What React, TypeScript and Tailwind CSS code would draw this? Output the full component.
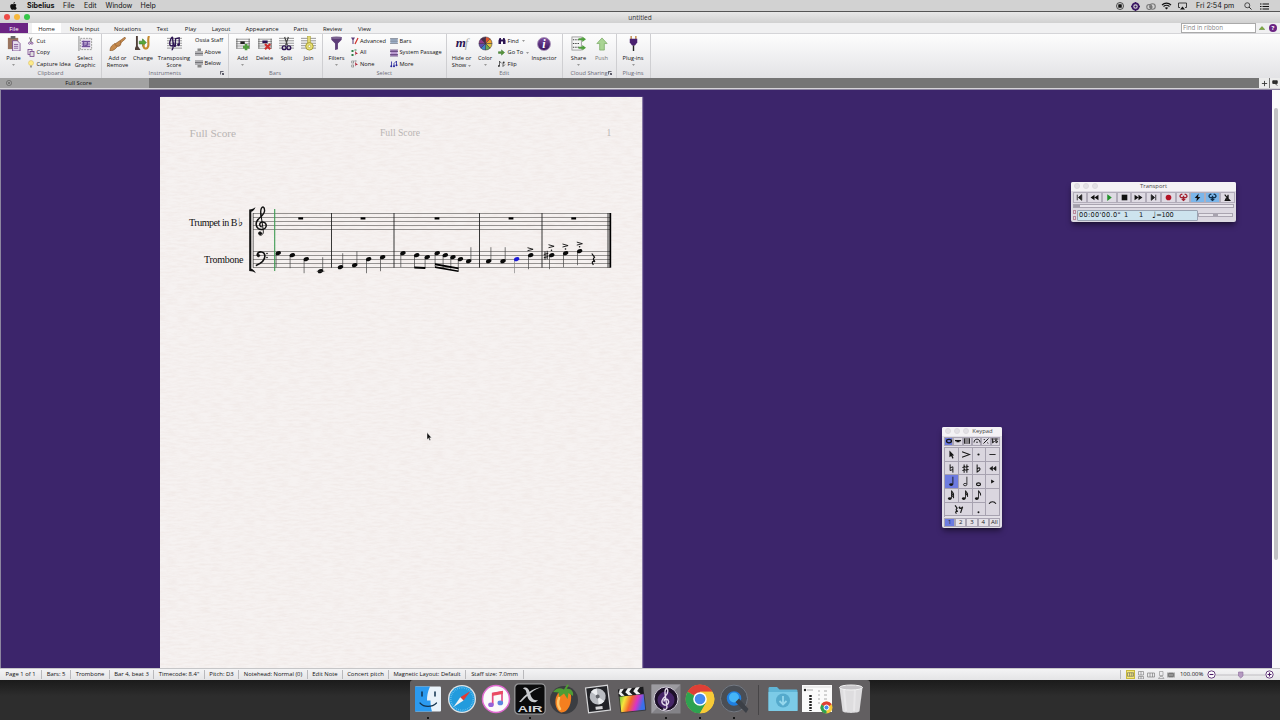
import type { ReactNode } from "react";

const UI = "font-['Open_Sans','Noto_Sans',sans-serif]";

/* ---------- small helpers ---------- */

function Icon({ s = 16, h, box = "0 0 16 16", children }: { s?: number; h?: number; box?: string; children: ReactNode }) {
  return (
    <svg width={s} height={h ?? s} viewBox={box} fill="none" className="block shrink-0">
      {children}
    </svg>
  );
}

function StaffLines({ top = 2.5, gap = 2.6, n = 5 }: { top?: number; gap?: number; n?: number }) {
  return (
    <>
      {Array.from({ length: n }, (_, i) => (
        <path key={i} d={`M0 ${top + i * gap}H16`} stroke="#777" strokeWidth="0.8" />
      ))}
    </>
  );
}

function Big({ w, icon, label, sub, drop, muted }: { w: string; icon: ReactNode; label: string; sub?: string; drop?: boolean; muted?: boolean }) {
  return (
    <div className={`flex shrink-0 flex-col items-center pt-[2.5px] ${w} ${muted ? "text-[#777]" : "text-[#111]"}`}>
      <div className="flex h-[15px] items-center">{icon}</div>
      <span className="mt-[4px] whitespace-nowrap leading-[6.5px]">{label}</span>
      {sub && <span className="whitespace-nowrap leading-[6.5px]">{sub}</span>}
      {drop && <Caret />}
    </div>
  );
}

function Caret() {
  return (
    <svg width="3" height="2" viewBox="0 0 3 2" className="mt-[2px] inline-block shrink-0">
      <path d="M0 0H3L1.5 2Z" fill="#999" />
    </svg>
  );
}

function Small({ icon, label, drop }: { icon?: ReactNode; label: string; drop?: boolean }) {
  return (
    <div className="flex h-[11.5px] items-center whitespace-nowrap">
      {icon && <div className="flex w-[9.5px] shrink-0 items-center">{icon}</div>}
      <span>{label}</span>
      {drop && <span className="ml-[3px] mb-[2px] flex"><Caret /></span>}
    </div>
  );
}

function Group({ w, title, launcher, children }: { w: string; title: string; launcher?: boolean; children: ReactNode }) {
  return (
    <div className={`flex h-full shrink-0 flex-col border-r border-[#cfcfd2] ${w}`}>
      <div className="flex h-[35.5px] shrink-0">{children}</div>
      <div className="relative h-[8px] whitespace-nowrap text-center leading-[8px] text-[#6b6b78]">
        {title}
        {launcher && (
          <svg width="4" height="4" viewBox="0 0 4 4" className="absolute right-[4px] top-[2px]">
            <path d="M.4 3.5V.4H3.5M1.8 1.8L3.5 3.5M3.6 2V3.6H2" stroke="#334" strokeWidth=".8" fill="none" />
          </svg>
        )}
      </div>
    </div>
  );
}

/* ---------- menu bar ---------- */

function MenuBar() {
  return (
    <div className="flex h-3 items-center justify-between border-b border-[#555] bg-[#d2d2d2] pl-[10px] pr-[11px] font-['Inter',sans-serif] text-[7px] text-[#111]">
      <div className="flex items-center pt-[1px]">
        <svg width="7" height="8" viewBox="0 0 14 17" className="mr-[10px]">
          <path d="M10 0C8 0 6.600 1.800 6.900 3.800 8.700 3.800 10.200 2 10 0ZM7 4.800C6 4.800 5.300 4.200 4 4.200 2 4.200 0 6 0 9.200 0 12.800 2.200 16.500 4.200 16.500 5.300 16.500 5.800 15.800 7.200 15.800 8.600 15.800 9 16.500 10.200 16.500 11.900 16.500 13.300 14.200 13.800 12.500 11.200 11.300 11.200 7.800 13.400 6.500 12.600 5.100 11.300 4.300 10 4.300 8.700 4.300 7.900 4.800 7 4.800Z" fill="#111" />
        </svg>
        <span className="w-[36px] text-[7.100px] font-bold">Sibelius</span>
        <span className="w-[21px]">File</span>
        <span className="w-[21.500px]">Edit</span>
        <span className="w-[35px]">Window</span>
        <span>Help</span>
      </div>
      <div className="flex items-center pt-[1px]">
        <Icon s={8}><circle cx="8" cy="8" r="7" stroke="#222" strokeWidth="1.500" /><rect x="4.500" y="4.500" width="7" height="7" rx="1" fill="#111" /></Icon>
        <span className="w-[7px]" />
        <Icon s={9}><circle cx="8" cy="8" r="5.500" stroke="#3b1764" strokeWidth="3" /><circle cx="8" cy="8" r="2" fill="#3b1764" /><path d="M8 0V3M8 13V16M0 8H3M13 8H16" stroke="#3b1764" strokeWidth="2.500" /></Icon>
        <span className="w-[6px]" />
        <Icon s={10} h={7} box="0 0 20 14"><circle cx="6.500" cy="8" r="5" stroke="#777" strokeWidth="2.200" /><circle cx="13" cy="7" r="5.500" stroke="#777" strokeWidth="2.200" /><circle cx="10" cy="8" r="3" fill="#777" /></Icon>
        <span className="w-[5px]" />
        <Icon s={11} h={8} box="0 0 20 16"><path d="M1 6C6 1 14 1 19 6M4 9C7.500 6 12.500 6 16 9" stroke="#111" strokeWidth="2.200" /><path d="M6.500 11.500C8.500 10 11.500 10 13.500 11.500L10 15Z" fill="#111" /></Icon>
        <span className="w-[6px]" />
        <Icon s={9} h={8} box="0 0 18 16"><path d="M4 11H1V2H17V11H14" stroke="#222" strokeWidth="1.700" /><path d="M9 9L14 15H4Z" fill="#111" /></Icon>
        <span className="ml-[9px] w-[48px] text-[7.100px]">Fri 2:54 pm</span>
        <Icon s={8}><circle cx="6.500" cy="6.500" r="5" stroke="#333" strokeWidth="1.700" /><path d="M10 10L15 15" stroke="#333" strokeWidth="2" /></Icon>
        <span className="w-[8px]" />
        <Icon s={9} h={7} box="0 0 18 14"><path d="M5 2H18M5 7H18M5 12H18" stroke="#111" strokeWidth="2" /><path d="M0 2H3M0 7H3M0 12H3" stroke="#111" strokeWidth="2" /></Icon>
      </div>
    </div>
  );
}

/* ---------- ribbon ---------- */

function TabRow() {
  return (
    <div className="flex h-[10.500px] items-stretch justify-between border-b border-[#d5d5d8] bg-[#f0f0f1] text-[5.900px] leading-[8px] text-[#111]">
      <div className="flex items-stretch *:pt-[1.500px]">
        <span className="w-[28px] bg-[#6b2483] text-center text-white">File</span>
        <span className="ml-[4px] w-[29px] bg-white text-center">Home</span>
        <span className="w-[47px] text-center">Note Input</span>
        <span className="w-[39px] text-center">Notations</span>
        <span className="w-[31px] text-center">Text</span>
        <span className="w-[25px] text-center">Play</span>
        <span className="w-[36px] text-center">Layout</span>
        <span className="w-[46px] text-center">Appearance</span>
        <span className="w-[31px] text-center">Parts</span>
        <span className="w-[33px] text-center">Review</span>
        <span className="w-[31px] text-center">View</span>
      </div>
      <div className="flex items-center pr-[3px]">
        <span className="mr-[3px] h-[9.500px] w-[75px] border border-[#aaa] bg-white pl-[1px] text-[6.200px] text-[#888]">Find in ribbon</span>
        <Icon s={6} h={4} box="0 0 12 8"><path d="M6 1L11.500 7H.5Z" fill="#7fae3a" stroke="#55792a" /></Icon>
        <span className="ml-[4px] flex h-[8px] w-[8px] items-center justify-center rounded-full bg-[#6b2483] text-[6px] font-bold text-white">?</span>
      </div>
    </div>
  );
}

const brace = "#4c4c52";
const plum = "#6d3a86";

function Ribbon() {
  return (
    <div className="flex h-[44.500px] bg-gradient-to-b from-[#fdfdfd] to-[#e3e3e6] text-[5.700px] text-[#111]">
      <Group w="w-[102px]" title="Clipboard">
        <Big w="w-[27px]" label="Paste" drop icon={<Icon s={15}><rect x="2" y="2" width="11" height="12" fill="#9a7560" /><rect x="5" y="0" width="5" height="3" fill="#666" /><path d="M7 5H12L15 8V16H7Z" fill="#e9e2f0" stroke={plum} strokeWidth=".8" /><path d="M8.500 9H13M8.500 11H13M8.500 13H13" stroke={plum} strokeWidth=".8" /></Icon>} />
        <div className="w-[43px] pt-[2px]">
          <Small label="Cut" icon={<Icon s={8}><path d="M5 1L9 10M10 1L6 10" stroke="#555" strokeWidth="1.500" /><circle cx="5" cy="12.500" r="2" stroke={plum} strokeWidth="1.500" /><circle cx="10" cy="12.500" r="2" stroke={plum} strokeWidth="1.500" /></Icon>} />
          <Small label="Copy" icon={<Icon s={8}><rect x="2" y="1" width="8" height="10" fill="#eee" stroke={plum} strokeWidth="1.500" /><rect x="6" y="5" width="8" height="10" fill="#ddd" stroke={plum} strokeWidth="1.500" /></Icon>} />
          <Small label="Capture Idea" icon={<Icon s={8}><circle cx="8" cy="6" r="5" fill="#fdeb8a" stroke="#d8b95a" /><rect x="6" y="11" width="4" height="4" fill="#999" /></Icon>} />
        </div>
        <Big w="w-[30px]" label="Select" sub="Graphic" icon={<Icon s={15}><rect x="2.500" y="2.500" width="12" height="12" fill="#eee" stroke="#999" strokeDasharray="2 1" /><rect x="4" y="4" width="9" height="9" fill="#d9c9e4" /><path d="M4 6H13M4 8.500H13M4 11H13M6 5V11L10 9.500V6" stroke="#70509a" strokeWidth="1.200" /><path d="M1 0V16" stroke="#888" /></Icon>} />
      </Group>

      <Group w="w-[126.500px]" title="Instruments" launcher>
        <Big w="w-[31px]" label="Add or" sub="Remove" icon={<Icon s={17} h={14} box="0 0 18 15"><path d="M17 0L13 3 7 7C4 8 1 10 1 15C4 15 7 13 9 10L14 5 17.500 2Z" fill="#c68a4c" stroke="#8b5a2f" strokeWidth=".7" /><path d="M6 6.500C8 13 14 9 12 4" stroke="#a9713c" strokeWidth="1.300" /></Icon>} />
        <Big w="w-[20px]" label="Change" icon={<Icon s={16} h={15} box="0 0 17 16"><path d="M2 0V12M.5 14L2 11 4 14Z" stroke="#51413a" strokeWidth="2" /><path d="M4.500 5.500H8V3L12 7 8 11V8.500H4.500Z" fill="#58a83b" stroke="#2f6d22" strokeWidth=".6" /><path d="M15 0C13 3 15 8 14 11S9 15 9 9" stroke="#c58a2e" strokeWidth="2.300" /></Icon>} />
        <Big w="w-[42px]" label="Transposing" sub="Score" icon={<Icon s={15}><StaffLines /><path d="M5 15C8 14 6 5 6 2S2 6 3 9 8 10 7 7" stroke="#2c1452" strokeWidth="1.500" /><path d="M9 10V3L13 2V9" stroke="#2c1452" strokeWidth="1.300" /><circle cx="8.300" cy="10.300" r="1.500" fill="#2c1452" /><circle cx="12.300" cy="9.300" r="1.500" fill="#2c1452" /></Icon>} />
        <div className="pt-[1.500px]">
          <Small label="Ossia Staff" />
          <Small label="Above" icon={<Icon s={8}><rect x="5" y="1" width="7" height="5" fill="#888" /><path d="M0 8H16M0 11H16M0 14H16" stroke={brace} strokeWidth="1.500" /></Icon>} />
          <Small label="Below" icon={<Icon s={8}><rect x="5" y="10" width="8" height="5" fill="#888" /><path d="M0 2H16M0 5H16M0 8H16" stroke={brace} strokeWidth="1.500" /></Icon>} />
        </div>
      </Group>

      <Group w="w-[94px]" title="Bars">
        <span className="w-[3px]" />
        <Big w="w-[22px]" label="Add" drop icon={<Icon s={14}><StaffLines /><path d="M1 2V13M15 2V13" stroke="#666" /><rect x="5" y="5" width="5" height="3" fill="#222" /><path d="M11.500 8V15M8 11.500H15" stroke="#4f9e3c" strokeWidth="3" /></Icon>} />
        <Big w="w-[22px]" label="Delete" icon={<Icon s={14}><StaffLines /><path d="M1 2V13M15 2V13" stroke="#666" /><rect x="5" y="4" width="6" height="3" fill="#2c1452" /><path d="M8 8L14 14M14 8L8 14" stroke="#cf2e2e" strokeWidth="2.500" /></Icon>} />
        <Big w="w-[22px]" label="Split" icon={<Icon s={15}><StaffLines /><path d="M6 1L9 10M10 1L7 10" stroke="#444" strokeWidth="1.300" /><circle cx="5.500" cy="12.500" r="2" stroke="#2c1452" strokeWidth="1.500" /><circle cx="10.500" cy="12.500" r="2" stroke="#2c1452" strokeWidth="1.500" /></Icon>} />
        <Big w="w-[22px]" label="Join" icon={<Icon s={15}><StaffLines /><rect x="7" y="0" width="3" height="8" fill="#e1d873" stroke="#a39b33" strokeWidth=".6" /><circle cx="9" cy="11" r="4" fill="#e8df72" stroke="#a39b33" /><circle cx="9" cy="11" r="1.300" fill="#fff" stroke="#a39b33" strokeWidth=".6" /></Icon>} />
      </Group>

      <Group w="w-[124.500px]" title="Select">
        <Big w="w-[28px]" label="Filters" drop icon={<Icon s={13} h={15} box="0 0 13 16"><path d="M1 1H12V4L8 8V14L5 15V8L1 4Z" fill="#5d3d78" /><ellipse cx="6.500" cy="1.800" rx="5.500" ry="1.300" fill="#7b6390" /></Icon>} />
        <div className="w-[39.500px] pt-[2px]">
          <Small label="Advanced" icon={<Icon s={8}><path d="M0 1H8L5 6V14H3V6Z" fill="#5d3d78" /><path d="M8 14L14 2" stroke="#d0342c" strokeWidth="2.500" /></Icon>} />
          <Small label="All" icon={<Icon s={8}><rect x="1" y="2" width="4" height="4" fill="#2f7d44" /><rect x="1" y="10" width="4" height="4" fill="#2f7d44" /><path d="M8 4L14 10 10.500 10 9 13Z" fill="#b2283a" /><path d="M7 2H11" stroke="#2f7d44" strokeWidth="2" /></Icon>} />
          <Small label="None" icon={<Icon s={8}><rect x="1.500" y="2" width="4" height="4" stroke="#666" /><rect x="1.500" y="10" width="4" height="4" stroke="#666" /><path d="M8 4L14 10 10.500 10 9 13Z" fill="#b2283a" /><path d="M7 2H11" stroke="#555" strokeWidth="1.500" /></Icon>} />
        </div>
        <div className="pt-[2px]">
          <Small label="Bars" icon={<Icon s={8}><rect x="1" y="3" width="14" height="10" fill="#a9bdd6" /><path d="M0 3H16M0 6H16M0 9.500H16M0 13H16" stroke="#666b78" strokeWidth="1.200" /></Icon>} />
          <Small label="System Passage" icon={<Icon s={8}><rect x="1" y="2" width="14" height="12" fill="#b999cf" /><path d="M0 2H16M0 5H16M0 11H16M0 14H16" stroke="#55356e" strokeWidth="1.500" /></Icon>} />
          <Small label="More" icon={<Icon s={8}><path d="M3 12V3M8 12V7L13 2V10" stroke="#24249c" strokeWidth="1.600" /><circle cx="2.500" cy="12.500" r="2" fill="#24249c" /><circle cx="8" cy="12.500" r="2" fill="#24249c" /><circle cx="13" cy="10.500" r="2" fill="#24249c" /></Icon>} />
        </div>
      </Group>

      <Group w="w-[115.500px]" title="Edit">
        <div className="flex w-[29px] shrink-0 flex-col items-center pt-[2.500px]">
          <div className="flex h-[15px] items-center pb-[2px] font-['Liberation_Serif',serif] text-[13px] font-bold italic tracking-[-1px] text-[#2c1452]">
            m<span className="font-normal text-[#aaa]">f</span>
          </div>
          <span className="mt-[4px] whitespace-nowrap leading-[6.500px]">Hide or</span>
          <span className="flex items-center gap-[2px] leading-[6.500px]">Show <Caret /></span>
        </div>
        <Big w="w-[18px]" label="Color" drop icon={<Icon s={15}>
          {["#e0562c", "#f0a32b", "#d9c13b", "#6aa84f", "#3d85c6", "#5b4bb0", "#8e3a86", "#4a2a4a"].map((c, i) => (
            <path key={c} d="M8 8V1A7 7 0 0 1 12.950 3.050Z" fill={c} stroke="#33283d" strokeWidth=".5" transform={`rotate(${i * 45} 8 8)`} />
          ))}
        </Icon>} />
        <div className="w-[36px] pl-[4px] pt-[2px]">
          <Small label="Find" drop icon={<Icon s={8}><path d="M1 14V7L3 2H6V5H10V2H13L15 7V14H10V9H6V14Z" fill="#2c1452" /></Icon>} />
          <Small label="Go To" drop icon={<Icon s={7}><path d="M1 6H8V2L15 8 8 14V10H1Z" fill="#58953b" stroke="#2f6d22" /></Icon>} />
          <Small label="Flip" icon={<Icon s={8}><path d="M3 2V12M3 3L7 6M10 13V5M10 13L14 9" stroke="#333" strokeWidth="1.500" /><circle cx="1.800" cy="12" r="1.800" fill="#333" /><circle cx="11.500" cy="5" r="1.800" fill="#333" /></Icon>} />
        </div>
        <Big w="w-[28px]" label="Inspector" icon={<span className="flex h-[14px] w-[14px] items-center justify-center rounded-full border border-[#a58fb5] bg-gradient-to-b from-[#7b4a9c] to-[#3b1560] font-['Liberation_Serif',serif] text-[12px] font-bold italic leading-none text-white">i</span>} />
      </Group>

      <Group w="w-[54px]" title="Cloud Sharing" launcher>
        <span className="w-[3.500px]" />
        <Big w="w-[25px]" label="Share" drop icon={<Icon s={15}><rect x="1" y="1" width="10" height="14" fill="#f4f4f4" stroke="#888" strokeWidth=".8" /><path d="M2 4H9M2 8H9M2 12H9" stroke="#444" strokeWidth="1.300" strokeDasharray="1.500 1" /><path d="M8 3.500H13M8 12.500H13" stroke="#4f9e3c" strokeWidth="2" /><path d="M12 .5L16 3.500 12 6.500ZM12 9.500L16 12.500 12 15.500Z" fill="#4f9e3c" /></Icon>} />
        <Big w="w-[21px]" label="Push" muted icon={<Icon s={12} h={14} box="0 0 12 15"><path d="M6 1L11.500 7H8.500V14H3.500V7H.5Z" fill="#a9d493" stroke="#7cab68" strokeWidth=".8" /></Icon>} />
      </Group>

      <Group w="w-[34px]" title="Plug-ins">
        <Big w="w-[33px]" label="Plug-ins" drop icon={<Icon s={9} h={15} box="0 0 9 16"><path d="M2 0V4M7 0V4" stroke="#c08a4a" strokeWidth="1.500" /><path d="M.5 3H8.500V7L6 10H3L.5 7Z" fill="#4a2170" /><path d="M4.500 10V16" stroke="#222" strokeWidth="1.500" /></Icon>} />
      </Group>
    </div>
  );
}

/* ---------- score ---------- */

// x, y of the head; dir 1 = stem down, -1 = stem up; len = stem length
const notes: [number, number, number, number][] = [
  [278.3, 253.2, 1, 14], [292.3, 255.2, 1, 13], [306.3, 259.2, 1, 14], [320.5, 271.2, -1, 14],
  [340.5, 267.2, -1, 14], [354.7, 265.2, -1, 14], [368.7, 259.2, 1, 14], [382.7, 257.2, 1, 14],
  [403, 253.2, 1, 14], [416.7, 255.2, 1, 12.5], [427.3, 257.2, 1, 11],
  [437.3, 253.2, 1, 13.5], [445.3, 255.2, 1, 13], [453, 257.2, 1, 12.5], [460.5, 259.2, 1, 12], [468.7, 261.2, -1, 14],
  [488.7, 261.2, -1, 14], [503, 261.2, -1, 14], [516.7, 259.2, 1, 14], [530.7, 255.2, 1, 14],
  [551.7, 255.2, 1, 14], [565.7, 253.2, 1, 14], [579.7, 251.2, 1, 14],
];
const accents = [[530.3, 249.3], [551.3, 246.3], [565.3, 245.6], [579.6, 243.7]];
const bars = [331.5, 394, 479.5, 542, 608];

function Score() {
  return (
    <svg viewBox="160 97 482 571" width="482" height="571" className="block">
      <defs>
        <filter id="paper" x="0" y="0" width="100%" height="100%">
          <feTurbulence type="fractalNoise" baseFrequency="0.09 0.5" numOctaves="3" seed="4" />
          <feColorMatrix values="0 0 0 0 .74  0 0 0 0 .62  0 0 0 0 .58  .9 0 0 0 -.3" />
        </filter>
      </defs>
      <rect x="160" y="97" width="482" height="571" fill="#f6f2f1" />
      <rect x="160" y="97" width="482" height="571" filter="url(#paper)" opacity=".45" />

      <g fontFamily="'Liberation Serif', serif">
        <g fill="#b9b5b4">
          <text x="189.500" y="137" fontSize="11.300" textLength="46.500">Full Score</text>
          <text x="380" y="136" fontSize="9.700" textLength="40">Full Score</text>
          <text x="606.500" y="136" fontSize="9.500">1</text>
        </g>
        <text x="189" y="225.500" fontSize="10" textLength="48.500" fill="#111">Trumpet in B</text>
        <text x="238" y="226" fontSize="11" fontFamily="'DejaVu Sans', sans-serif" fill="#111">♭</text>
        <text x="204" y="263" fontSize="10" textLength="39.500" fill="#111">Trombone</text>
      </g>

      {[213.5, 251.5].map((top) =>
        [0, 1, 2, 3, 4].map((i) => (
          <path key={`${top}-${i}`} d={`M253 ${top + i * 4}H610`} stroke="#6c6867" strokeWidth=".7" />
        ))
      )}
      {bars.map((x) => (
        <path key={x} d={`M${x} 213V267.700`} stroke="#222" strokeWidth=".9" />
      ))}
      <path d="M253.200 213V267.700" stroke="#333" strokeWidth=".7" />
      <path d="M610.300 213V267.700" stroke="#000" strokeWidth="1.800" />
      <path d="M249.200 209.500C252 209.500 254 208.500 255.500 207C254.500 210 253 211.300 251.300 211.800V268.800C253 269.300 254.800 270.500 255.800 273.200C254 271.800 252 270.900 249.200 270.900Z" fill="#111" />

      {/* clefs */}
      <g fill="none" stroke="#111" strokeLinecap="round">
        <path d="M261.200 226.800C259 225.800 259 222.300 262 221.900C265 221.700 266.800 224 266.100 226.600C265.200 229.500 261 230.400 258.300 228.600C255.200 226.400 255.700 222.400 258 219.600" strokeWidth="1.500" />
        <path d="M257.400 220.400C259.400 217.500 264.500 215 264.600 210.500C264.500 206.500 262.500 206.200 261.400 208.300C260.400 210.300 260.600 213 261 216" strokeWidth="1.400" />
        <path d="M260.800 213.500L263.300 230.500C263.800 233.800 262 235.600 260 235.200" strokeWidth="1" />
        <circle cx="260" cy="233.300" r="1.500" fill="#111" strokeWidth=".8" />
        <path d="M257.200 255C258 250.800 264.600 250.700 264.900 256C264.900 260.500 260.500 263.500 256.500 265.300" strokeWidth="1.600" />
        <circle cx="258.400" cy="255.600" r="1.300" fill="#111" strokeWidth=".6" />
      </g>
      <circle cx="267" cy="253.500" r=".8" fill="#111" />
      <circle cx="267" cy="257.500" r=".8" fill="#111" />

      {[300.7, 363, 437, 511, 573.7].map((x) => (
        <rect key={x} x={x - 2.4} y="217.300" width="4.800" height="2.200" fill="#000" />
      ))}

      {notes.map(([x, y, dir, len]) => {
        const blue = x === 516.7;
        const sx = x - dir * 2.2;
        return (
          <g key={`${x}-${y}`}>
            <path d={`M${sx} ${y}V${y + dir * len}`} stroke={blue ? "#888" : "#444"} strokeWidth=".7" />
            <ellipse cx={x} cy={y} rx="2.800" ry="1.950" fill={blue ? "#1a1ad6" : "#0a0a0a"} transform={`rotate(-20 ${x} ${y})`} />
          </g>
        );
      })}
      <path d="M316.800 271.300H324.400" stroke="#333" strokeWidth=".7" />

      {/* beams */}
      <path d="M414.300 266.500L425.300 267V269L414.300 268.400Z" fill="#000" />
      <path d="M435 263.300L458.500 267.500V269.200L435 265.200ZM435 266.300L458.500 270.400V272L435 268Z" fill="#000" />

      {accents.map(([x, y]) => (
        <path key={x} d={`M${x - 2.8} ${y - 1.6}L${x + 2.8} ${y}L${x - 2.8} ${y + 1.4}`} fill="none" stroke="#111" strokeWidth=".9" />
      ))}
      <circle cx="551.500" cy="250.300" r=".8" fill="#111" />
      <circle cx="565.500" cy="249" r=".8" fill="#111" />
      <circle cx="579.600" cy="246.700" r=".8" fill="#111" />
      <path d="M545 251.300V259.800M547.200 250.800V259.300M543.800 254.500L548.300 253.300M543.800 257.700L548.300 256.500" stroke="#111" strokeWidth=".9" />
      <path d="M591.800 253.500L594.500 257.200C592.800 258.700 593 259.500 595 261.700C592.500 260.700 591.300 262 593.400 264.800" fill="none" stroke="#111" strokeWidth="1.200" />

      <path d="M274.700 209V271" stroke="#3d9a52" strokeWidth="1.100" />

      {/* mouse pointer */}
      <path d="M427 432.500V439.500L428.500 438.200L429.600 440.600L430.700 440.100L429.600 437.800H431.600Z" fill="#111" stroke="#fff" strokeWidth=".4" />
    </svg>
  );
}

/* ---------- floating panels ---------- */

function PanelTitle({ children, shift }: { children: string; shift?: string }) {
  return (
    <div className="relative flex h-[8.500px] items-center bg-[#f4f2f5] text-[5.900px] text-[#444]">
      <div className="absolute left-[3px] flex gap-[3px]">
        {[0, 1, 2].map((i) => (
          <span key={i} className="h-[6px] w-[6px] rounded-full border border-[#dcd9de] bg-[#e3e0e5]" />
        ))}
      </div>
      <span className={`w-full text-center ${shift ?? ""}`}>{children}</span>
    </div>
  );
}

const loop = "M3 3C0 7 4 10 8 7M13 3C16 7 12 10 8 7M3 3L6 2M13 3L10 2M8 5V13M5 10.500L8 13 11 10.500";

const transport: [ReactNode, string][] = [
  [<path d="M4 3V13M12 3L6 8 12 13Z" stroke="#222" strokeWidth="1.500" fill="#222" />, ""],
  [<path d="M8 3L1 8 8 13ZM15 3L8 8 15 13Z" fill="#111" />, ""],
  [<path d="M4 2L12 8 4 14Z" fill="#23912c" />, ""],
  [<rect x="3" y="3" width="10" height="10" fill="#111" />, ""],
  [<path d="M1 3L8 8 1 13ZM8 3L15 8 8 13Z" fill="#111" />, ""],
  [<path d="M12 3V13M4 3L10 8 4 13Z" stroke="#222" strokeWidth="1.500" fill="#222" />, ""],
  [<circle cx="8" cy="8" r="5" fill="#b31326" />, ""],
  [<path d={loop} stroke="#a3202f" strokeWidth="2.300" />, ""],
  [<path d="M10 1L3 9H7L6 15 13 7H9Z" fill="#111" />, "bg-[#7cb6ea]"],
  [<path d={loop} stroke="#12304d" strokeWidth="2.300" />, "bg-[#7cb6ea]"],
  [<path d="M3 3L9 10M9 3V10L12 13H4L6 9" stroke="#111" strokeWidth="2" fill="#333" />, ""],
];

function Transport() {
  return (
    <div className="absolute left-[1071px] top-[182px] h-[40px] w-[165px] overflow-hidden rounded-[2px] bg-[#dcd8e1] shadow-md shadow-black/40">
      <PanelTitle>Transport</PanelTitle>
      <div className="mx-[1.500px] mt-[1px] flex h-[11px]">
        {transport.map(([icon, bg], i) => (
          <div key={i} className={`flex flex-1 items-center justify-center border border-[#b2adba] ${bg || "bg-[#dedae3]"}`}>
            <Icon s={9}>{icon}</Icon>
          </div>
        ))}
      </div>
      <div className="mx-[2px] mt-[1.500px] h-[4px] border border-[#a9a4b0] bg-[#e9e6ed]">
        <div className="h-full w-[6px] bg-[#a39fab]" />
      </div>
      <div className="mt-[1.500px] flex items-center">
        <div className="ml-[2px] mr-[1px] flex flex-col gap-[2px]">
          <span className="h-[4px] w-[3px] border border-[#b98a9c]" />
          <span className="h-[4px] w-[3px] border border-[#b98a9c]" />
        </div>
        <div className="flex h-[11.500px] w-[121px] items-center whitespace-pre rounded-[1px] border border-[#9aa3b2] bg-[#cde3ee] pl-[1px] pt-[1px] font-['DejaVu_Sans',sans-serif] text-[6.600px] text-[#111]">
          <span className="w-[45px] tracking-[0.300px]">00:00'00.0"</span>
          <span className="w-[15px]">1</span>
          <span className="w-[13px]">1</span>
          <span className="text-[9px] leading-none">♩</span>
          <span className="tracking-[-0.200px]">=100</span>
        </div>
        <div className="flex h-[4px] w-[35px] justify-center border border-[#aaa5b1] bg-[#e6e3ea]">
          <span className="h-full w-[5px] bg-[#a8a3af]" />
        </div>
      </div>
    </div>
  );
}

const S = "#151515";
const keys: ReactNode[] = [
  <path d="M5 2V12L7.500 10 9.500 14 11 13 9.300 9.500H12Z" fill={S} />,
  <path d="M3 4L14 8 3 12" stroke={S} strokeWidth="1.500" />,
  <circle cx="8" cy="8" r="1.600" fill={S} />,
  <path d="M3.500 8H12.500" stroke={S} strokeWidth="1.300" />,
  <path d="M6 2V11L10 9.500M10 14V5.500L6 7" stroke={S} strokeWidth="1.400" />,
  <path d="M6 2V14M10 2V14M3.500 6.500L12.500 5M3.500 11L12.500 9.500" stroke={S} strokeWidth="1.500" />,
  <path d="M6 2V13C8 12 11 10 10 8S7 8 6 9" stroke={S} strokeWidth="1.500" />,
  <path d="M8 5L4 8 8 11ZM13 5L9 8 13 11Z" fill={S} stroke={S} />,
  <><path d="M10 1V12" stroke={S} strokeWidth="1.300" /><ellipse cx="7.500" cy="12.500" rx="2.800" ry="2" fill={S} /></>,
  <><path d="M10 1V12" stroke={S} strokeWidth="1.200" /><ellipse cx="7.500" cy="12.500" rx="2.400" ry="1.700" stroke={S} strokeWidth="1.200" /></>,
  <ellipse cx="8" cy="12" rx="3" ry="2" stroke={S} strokeWidth="1.600" />,
  <path d="M6 5L11 8 6 11Z" fill={S} />,
];

const flagged = (flags: number) => (
  <>
    <path d="M8 1V12" stroke={S} strokeWidth="1.200" />
    {Array.from({ length: flags }, (_, i) => (
      <path key={i} d={`M8 ${1 + i * 3}C9 ${4 + i * 3} 12 ${4 + i * 3} 11 ${8 + i * 2}`} stroke={S} strokeWidth="1.500" />
    ))}
    <ellipse cx="5.500" cy="12.500" rx="2.700" ry="2" fill={S} />
  </>
);

function Key({ children, cls = "" }: { children: ReactNode; cls?: string }) {
  return (
    <div className={`flex min-w-0 items-center justify-center border-b border-r border-[#a7a2b0] ${cls || "bg-[#dad6df]"}`}>
      <Icon s={11}>{children}</Icon>
    </div>
  );
}

function Keypad() {
  const tabs = [
    <ellipse cx="8" cy="8" rx="5" ry="3.500" stroke={S} strokeWidth="2.500" />,
    <path d="M2 7H14M5 9H11" stroke={S} strokeWidth="2.500" />,
    <path d="M2 4H14M2 8H14M3 3V13M13 3V13M2 12H14" stroke={S} strokeWidth="1.700" />,
    <><path d="M2 11C2 2 14 2 14 11" stroke={S} strokeWidth="1.800" /><circle cx="8" cy="10.500" r="1.500" fill={S} /></>,
    <path d="M3 13L13 3M4 4L5 6M11 11L12 13" stroke={S} strokeWidth="2" />,
    <path d="M3 3V12L7 9 3 8M10 3V12L14 9 8 7M1 4H15" stroke={S} strokeWidth="1.700" />,
  ];
  return (
    <div className="absolute left-[942px] top-[427px] h-[101px] w-[60px] overflow-hidden rounded-[2px] bg-[#e2dfe6] shadow-md shadow-black/40">
      <PanelTitle shift="pl-[21px]">Keypad</PanelTitle>
      <div className="mx-[2px] mt-[1px] flex h-[9.500px]">
        {tabs.map((t, i) => (
          <div key={i} className={`flex min-w-0 flex-1 items-center justify-center border border-[#aaa5b3] ${i === 0 ? "bg-[#6d7be0]" : "bg-[#dad6df]"}`}>
            <Icon s={8}>{t}</Icon>
          </div>
        ))}
      </div>
      <div className="mx-[2px] mt-[1px] grid h-[69.500px] grid-cols-4 grid-rows-5 border-l border-t border-[#a7a2b0]">
        {keys.map((k, i) => (
          <Key key={i} cls={i === 8 ? "bg-[#6d7be0]" : ""}>{k}</Key>
        ))}
        <Key>{flagged(3)}</Key>
        <Key>{flagged(2)}</Key>
        <Key>{flagged(1)}</Key>
        <Key cls="row-span-2 bg-[#dad6df]"><path d="M3 10C5 6 11 6 13 10" stroke={S} strokeWidth="1.500" /></Key>
        <Key cls="col-span-2 bg-[#dad6df]">
          <path d="M3 2L6 6C4 8 4 9 7 11C4 10 3 12 5 14M9 5C10 7 12 7 14 4L11 13" stroke={S} strokeWidth="1.700" />
          <circle cx="9.500" cy="5" r="1.300" fill={S} />
        </Key>
        <Key><circle cx="8" cy="12" r="1.400" fill={S} /></Key>
      </div>
      <div className="mx-[2px] mt-[1px] flex h-[9px] text-[6px] text-[#222]">
        {["1", "2", "3", "4", "All"].map((t, i) => (
          <span key={t} className={`flex flex-1 items-center justify-center border border-[#aaa5b3] ${i === 0 ? "bg-[#6d7be0]" : "bg-[#e4e1e8]"}`}>{t}</span>
        ))}
      </div>
    </div>
  );
}

/* ---------- status bar ---------- */

function StatusBar() {
  const cell = "flex h-[9px] items-center justify-center border-r border-[#b9b9bc] whitespace-nowrap";
  return (
    <div className="flex h-3 items-center justify-between border-t border-[#c6c6c8] bg-gradient-to-b from-[#f4f4f5] to-[#e4e4e6] text-[5.900px] text-[#111]">
      <div className="flex">
        <span className={`${cell} w-[42px]`}>Page 1 of 1</span>
        <span className={`${cell} w-[29px]`}>Bars: 5</span>
        <span className={`${cell} w-[39px]`}>Trombone</span>
        <span className={`${cell} w-[44px]`}>Bar 4, beat 3</span>
        <span className={`${cell} w-[51px]`}>Timecode: 8.4"</span>
        <span className={`${cell} w-[34px]`}>Pitch: D3</span>
        <span className={`${cell} w-[69px] text-[5.800px]`}>Notehead: Normal (0)</span>
        <span className={`${cell} w-[35px]`}>Edit Note</span>
        <span className={`${cell} w-[46px]`}>Concert pitch</span>
        <span className={`${cell} w-[77px] text-[5.800px]`}>Magnetic Layout: Default</span>
        <span className={`${cell} w-[58px]`}>Staff size: 7.0mm</span>
      </div>
      <div className="flex items-center pr-[6px]">
        <span className="mr-[5px] h-[9px] w-px bg-[#b9b9bc]" />
        <span className="flex h-[9px] w-[9px] items-center justify-center border border-[#c9b93c] bg-[#f6e97a]"><Icon s={7}><path d="M1 4H15V12H1ZM6 4V12M11 4V12" stroke="#666" strokeWidth="1.500" /></Icon></span>
        <span className="ml-[2px]"><Icon s={8}><path d="M3 1H13V8H3ZM8 1V8M3 11H13V16H3ZM8 11V16" stroke="#777" strokeWidth="1.200" /></Icon></span>
        <span className="ml-[2px]"><Icon s={8}><path d="M1 4H15V12H1ZM6 4V12M11 4V12" stroke="#777" strokeWidth="1.300" /></Icon></span>
        <span className="ml-[2px]"><Icon s={8}><path d="M5 1H12V9H5ZM3 15L6 11H11L14 15Z" stroke="#888" strokeWidth="1.200" /></Icon></span>
        <span className="ml-[2px]"><Icon s={8}><rect x="0" y="3" width="16" height="10" fill="#aaa" /><path d="M3 5H13V11H3ZM6 3V13M10 3V13" stroke="#666" strokeWidth="1.300" /></Icon></span>
        <span className="ml-[5px] w-[27px]">100.00%</span>
        <Icon s={9}><circle cx="8" cy="8" r="6.500" fill="#fff" stroke="#4c1d66" strokeWidth="1.500" /><path d="M4.500 8H11.500" stroke="#4c1d66" strokeWidth="2" /></Icon>
        <Icon s={49} h={8} box="0 0 49 8"><path d="M0 4H49" stroke="#b5b2b8" strokeWidth=".8" /><path d="M22.500 1H27V5L24.700 7 22.500 5Z" fill="#b49ac0" stroke="#8b6a9c" strokeWidth=".6" /></Icon>
        <Icon s={9}><circle cx="8" cy="8" r="6.500" fill="#fff" stroke="#4c1d66" strokeWidth="1.500" /><path d="M4.500 8H11.500M8 4.500V11.500" stroke="#4c1d66" strokeWidth="2" /></Icon>
      </div>
    </div>
  );
}

/* ---------- dock ---------- */

function DockItem({ running, children }: { running?: boolean; children: ReactNode }) {
  return (
    <div className="flex w-[34px] flex-col items-center pt-[3px]">
      <Icon s={32} box="0 0 32 32">{children}</Icon>
      {running && <span className="mt-[1.500px] h-[2px] w-[2px] rounded-full bg-black" />}
    </div>
  );
}

function Dock() {
  return (
    <div className="flex h-[40px] rounded-t-[3px] bg-[#625f61] pl-[1px] pr-[2px]">
      <DockItem running>
        <rect x="3" y="3.500" width="26" height="25" rx="1" fill="#eaf2f9" />
        <path d="M3 3.500H18C15.500 9 15 13 15 17.500H18.500C18.500 21 18.800 25 20 28.500H3Z" fill="#2b9af0" />
        <path d="M10 9V13M23 9V13" stroke="#12324d" strokeWidth="1.500" strokeLinecap="round" />
        <path d="M8 20C12 24.500 20 24.500 24.500 20" stroke="#12324d" strokeWidth="1.200" strokeLinecap="round" />
      </DockItem>
      <DockItem>
        <circle cx="16" cy="16" r="14" fill="#dfe3e6" />
        <circle cx="16" cy="16" r="12.700" fill="#229bdd" />
        <circle cx="16" cy="16" r="11.200" stroke="#8ed2f5" strokeWidth="1.500" strokeDasharray=".5 1.400" />
        <path d="M24.500 8L17.500 17.500 14.300 14.300Z" fill="#e33b34" />
        <path d="M7.500 24L17.500 17.500 14.300 14.300Z" fill="#f2f2f2" />
      </DockItem>
      <DockItem>
        <circle cx="16" cy="16" r="13.500" fill="#fafafa" stroke="#df6ad0" strokeWidth="1.500" />
        <path d="M12.700 21.500V10.500L22 8.700V19.500" stroke="#e34f86" strokeWidth="1.700" />
        <path d="M12 10L22.800 8V11L12 13Z" fill="#ea4b62" />
        <ellipse cx="11" cy="21.800" rx="2.800" ry="2.300" fill="#9662d8" />
        <ellipse cx="20.300" cy="19.900" rx="2.800" ry="2.300" fill="#5d86e0" />
      </DockItem>
      <DockItem running>
        <rect x=".8" y=".8" width="30.400" height="30.400" rx="4" fill="#0b0b0c" stroke="#98989a" strokeWidth="1.300" />
        <path d="M10 4.500C14 4 15 7 16 10S18 18 24 17L22 19C17 20 14 17 13 12 12 8 12 6 9 6ZM28 4C20 6 14 12 7 19L5 19C11 12 18 5 28 4Z" fill="#c9cbce" />
        <text x="16" y="28.500" textAnchor="middle" fontSize="8.500" fontWeight="700" textLength="25" lengthAdjust="spacingAndGlyphs" fontFamily="'Liberation Sans', sans-serif" fill="#d3d5d8">AIR</text>
      </DockItem>
      <DockItem>
        <circle cx="16" cy="17" r="14" fill="#3b3d41" />
        <path d="M9 12C6 17 7 27 13 29.500C20 30 24 20 23 12C20 7 12 7 9 12Z" fill="#f47f1f" />
        <path d="M11 15C9.500 19 10 23 12 26" stroke="#ffc76b" strokeWidth="2.500" strokeLinecap="round" />
        <path d="M5 9C8 5 12 4 16 6.500L19 1.500 21 2 18.500 6C23 5 26 9 25 13L20.500 10 19.500 16 16 10.500 11.500 14 10.500 9.500Z" fill="#4f9c35" />
      </DockItem>
      <DockItem>
        <g transform="rotate(-7 16 16)">
          <rect x="5" y="3.500" width="22" height="25" fill="#222327" stroke="#d6d6d8" strokeWidth="1.200" />
          <circle cx="16" cy="13.500" r="8" fill="#b9bcc1" />
          <path d="M16 13.500L10 8A8 8 0 0 1 16 5.500ZM16 13.500L22 19A8 8 0 0 1 16 21.500Z" fill="#eceef0" />
          <circle cx="16" cy="13.500" r="2" fill="#63666b" />
          <rect x="12.500" y="23.500" width="7" height="3" fill="#d8d8da" />
        </g>
      </DockItem>
      <DockItem>
        <defs>
          <linearGradient id="spectrum" x1="0" y1="0" x2="1" y2=".3">
            <stop offset="0" stopColor="#5fc73f" /><stop offset=".25" stopColor="#f7e53b" /><stop offset=".5" stopColor="#f4662c" /><stop offset=".75" stopColor="#d935c4" /><stop offset="1" stopColor="#3a70ea" />
          </linearGradient>
        </defs>
        <g transform="rotate(-6 16 16)">
          <rect x="3.500" y="12" width="25" height="16.500" fill="url(#spectrum)" stroke="#333" strokeWidth=".8" />
          <path d="M3 5H28.500V12H3Z" fill="#1b1b1d" />
          <path d="M5 5H9L6 8.500H3.500ZM13 5H17L14 8.500H10ZM21 5H25L22 8.500H18ZM3 8.500H6L9 12H5.500ZM10 8.500H14L17 12H13ZM18 8.500H22L25 12H21Z" fill="#f1f1f1" />
        </g>
      </DockItem>
      <DockItem running>
        <rect x="1.500" y="1.500" width="29" height="29" fill="#848388" />
        <path d="M1.500 1.500H30.500L1.500 30.500Z" fill="#9d9ca1" />
        <circle cx="16" cy="16" r="12" fill="#1c1028" stroke="#d2cdd8" strokeWidth="1" />
        <circle cx="16" cy="17" r="8.500" fill="#452567" />
        <path d="M14.500 18.500C13 16.500 16 15 18 17 20 20 17 22.500 14.500 22 10 20 12 16 15 13.500 19 10 18 5.500 16.500 5.500 14 6.500 15 11 15.500 14L17 24C17 27 14 27 13.500 25.500" stroke="#e5dced" strokeWidth="1.400" />
      </DockItem>
      <DockItem running>
        <circle cx="16" cy="16" r="14.300" fill="#f6c52f" />
        <path d="M16 16L3.600 8.800A14.300 14.300 0 0 1 28.400 8.800H16Z" fill="#de3f36" />
        <path d="M16 16L3.600 8.800A14.300 14.300 0 0 0 16 30.300L22.200 19.600Z" fill="#2ea251" />
        <path d="M22.200 19.600L16 30.300A14.300 14.300 0 0 0 28.400 8.800H16Z" fill="#f7ca37" />
        <circle cx="16" cy="16" r="6.800" fill="#fff" />
        <circle cx="16" cy="16" r="5.300" fill="#4689ee" />
      </DockItem>
      <DockItem running>
        <circle cx="16" cy="15.500" r="10.500" fill="#1f7fe0" stroke="#4a4e55" strokeWidth="6.500" />
        <circle cx="16" cy="15.500" r="13.500" stroke="#767b84" strokeWidth="1" />
        <circle cx="16" cy="14.500" r="5" fill="#45b5f7" />
        <path d="M17.500 19L21 15.500 30.500 26 28 30Z" fill="#3c4047" />
      </DockItem>
      <span className="mx-[7px] mt-[5px] h-[30px] w-px bg-[#474547]" />
      <DockItem>
        <path d="M1.500 5.500C1.500 4.500 2 4 3 4H10L12.500 6.500H29C30 6.500 30.500 7 30.500 8V26.500C30.500 27.500 30 28 29 28H3C2 28 1.500 27.500 1.500 26.500Z" fill="#60b5d6" />
        <path d="M1.500 9H30.500V28H1.500Z" fill="#7ccbe7" />
        <circle cx="16" cy="17.500" r="7" fill="#55aacc" />
        <path d="M16 13V21M12.500 18L16 21.500 19.500 18" stroke="#96d8ed" strokeWidth="1.800" />
      </DockItem>
      <DockItem>
        <rect x="1" y="2" width="30" height="27" fill="#fafafa" />
        <path d="M2 4H30" stroke="#ddd" />
        <circle cx="4" cy="7" r="1.200" fill="#222" />
        <path d="M9.500 12V28" stroke="#222" strokeWidth="2.500" strokeDasharray="2 1" />
        <path d="M6 7H12M17 8H19M17 12H19M17 16H19M17 20H19M23 8H26M23 12H26M23 16H26" stroke="#aaa" />
        <circle cx="25.500" cy="24.500" r="6" fill="#f7ca37" />
        <path d="M25.500 24.500L20.300 21.500A6 6 0 0 1 30.700 21.500Z" fill="#de3f36" />
        <path d="M25.500 24.500L20.300 21.500A6 6 0 0 0 25.500 30.500Z" fill="#2ea251" />
        <circle cx="25.500" cy="24.500" r="2.500" fill="#4689ee" stroke="#fff" />
      </DockItem>
      <DockItem>
        <path d="M4.500 4.500L7.500 28C8 30.500 24 30.500 24.500 28L27.500 4.500Z" fill="#dedddf" />
        <path d="M9 6L11 28M20 6L19 28" stroke="#e8e7e9" strokeWidth="2" />
        <ellipse cx="16" cy="4.500" rx="11.500" ry="2.500" fill="#c7c5c8" stroke="#f3f3f3" />
      </DockItem>
    </div>
  );
}

export default function App() {
  return (
    <div className={`relative flex h-[720px] w-[1280px] flex-col overflow-hidden bg-[#2a2a2a] ${UI}`}>
      <MenuBar />
      <div className="relative flex h-[11px] items-center justify-center bg-gradient-to-b from-[#e8e8e8] to-[#d1d1d1] text-[6.500px] leading-[8px] text-[#333]">
        <div className="absolute left-[4px] top-[2px] flex gap-[4px]">
          <span className="h-[6px] w-[6px] rounded-full bg-[#ee4b47]" />
          <span className="h-[6px] w-[6px] rounded-full bg-[#f6b73c]" />
          <span className="h-[6px] w-[6px] rounded-full bg-[#35c648]" />
        </div>
        untitled
      </div>
      <TabRow />
      <Ribbon />
      <div className="flex h-[10px] items-center bg-[#757575] text-[5.900px] text-[#111]">
        <div className="flex h-full w-[149px] items-center bg-[#a2a2a2] pl-[6px]">
          <Icon s={6}><circle cx="8" cy="8" r="7" stroke="#555" strokeWidth="1.500" /><path d="M5 5L11 11M11 5L5 11" stroke="#555" strokeWidth="1.500" /></Icon>
          <span className="w-[133px] text-center">Full Score</span>
        </div>
        <div className="ml-auto flex h-full gap-px">
          <span className="flex w-[10px] items-center justify-center bg-[#ececec]"><Icon s={7}><path d="M8 2V14M2 8H14" stroke="#333" strokeWidth="2" /></Icon></span>
          <span className="flex w-[10px] items-center justify-center bg-[#ececec]"><Icon s={6}><path d="M2 2H14V9H2ZM8 9L14 15" stroke="#111" strokeWidth="2" fill="#333" /></Icon></span>
        </div>
      </div>
      <div className="h-[2px] border-t border-[#d5d3d8] bg-[#8d86a0]" />

      {/* workspace */}
      <div className="flex h-[578px] bg-[#3c256b]">
        <div className="flex-1 border-l border-[#8d86a0] pl-[159px] pt-[7px]">
          <div className="w-[482px] shadow-[1px_0_1px_0_rgba(190,180,205,0.6)]">
            <Score />
          </div>
        </div>
        <div className="w-[8px] bg-[#fafafa] pl-[2px] pt-[18px]">
          <div className="h-[452px] w-[4px] rounded-full bg-[#c1c1c3]" />
        </div>
      </div>
      <StatusBar />
      <div className="flex flex-1 justify-center bg-gradient-to-b from-[#1b1b1b] to-[#2d2d2d] to-40%">
        <Dock />
      </div>

      <Transport />
      <Keypad />
    </div>
  );
}
